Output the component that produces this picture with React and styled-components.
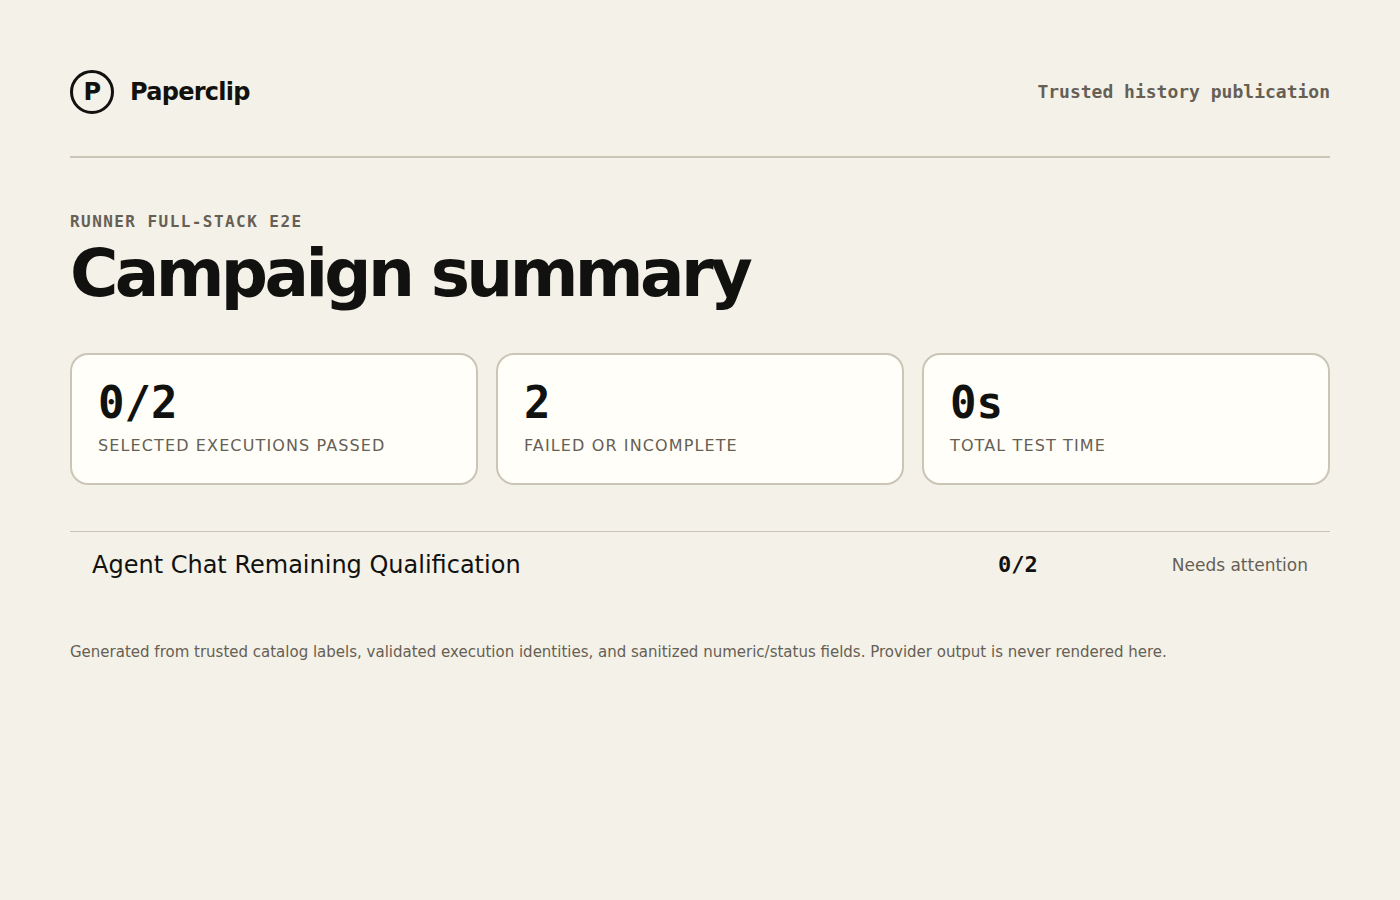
import styled, { createGlobalStyle } from 'styled-components';

const GlobalStyle = createGlobalStyle`
   * {
      box-sizing: border-box;
   }

   body {
      margin: 0;
      background: #f4f1e8;
      color: #11110f;
      font-family: 'DejaVu Sans', sans-serif;
   }
`;

const mono = `'DejaVu Sans Mono', monospace`;
const muted = '#665f55';
const line = '#cbc5b7';

const Page = styled.main`
   padding: 70px;
`;

const Header = styled.header`
   display: flex;
   align-items: center;
   justify-content: space-between;
   padding-bottom: 42px;
   border-bottom: 2px solid ${line};
`;

const Brand = styled.div`
   display: flex;
   align-items: center;
   gap: 16px;
   font-size: 24px;
   font-weight: 700;
   letter-spacing: -0.03em;
`;

const Mark = styled.span`
   display: grid;
   place-items: center;
   width: 44px;
   height: 44px;
   border: 3px solid #11110f;
   border-radius: 50%;
`;

const Source = styled.div`
   color: ${muted};
   font: 700 18px/22px ${mono};
`;

const Eyebrow = styled.p`
   margin: 54px 0 0;
   color: ${muted};
   font: 700 16px/20px ${mono};
   letter-spacing: 0.09em;
   text-transform: uppercase;
`;

const Title = styled.h1`
   margin: 7px 0 44px;
   font-size: 66px;
   line-height: 70px;
   letter-spacing: -0.055em;
`;

const Metrics = styled.section`
   display: grid;
   grid-template-columns: repeat(3, 1fr);
   gap: 18px;
`;

const Metric = styled.div`
   padding: 26px;
   background: #fffef8;
   border: 2px solid ${line};
   border-radius: 18px;
`;

const MetricValue = styled.strong`
   display: block;
   font: 700 44px/44px ${mono};
`;

const MetricLabel = styled.span`
   display: block;
   margin-top: 10px;
   color: ${muted};
   font-size: 16px;
   line-height: 22px;
   letter-spacing: 0.07em;
   text-transform: uppercase;
`;

const Table = styled.table`
   width: 100%;
   margin-top: 46px;
   border-collapse: collapse;
   border-top: 1px solid ${line};
`;

const Suite = styled.th`
   padding: 18px 22px;
   font-size: 24px;
   font-weight: 400;
   line-height: 30px;
   text-align: left;
`;

const Count = styled.td`
   width: 120px;
   padding: 0;
   font: 700 22px/30px ${mono};
`;

const Status = styled.td`
   width: 212px;
   padding: 0 22px 0 0;
   color: ${muted};
   font-size: 17px;
   text-align: right;
`;

const Note = styled.footer`
   margin-top: 44px;
   color: ${muted};
   font-size: 15px;
   line-height: 20px;
`;

const metrics = [
   { value: '0/2', label: 'Selected executions passed' },
   { value: '2', label: 'Failed or incomplete' },
   { value: '0s', label: 'Total test time' },
];

const suites = [
   {
      name: 'Agent Chat Remaining Qualification',
      passed: '0/2',
      status: 'Needs attention',
   },
];

const App = () => {
   return (
      <>
         <GlobalStyle />
         <Page>
            <Header>
               <Brand>
                  <Mark>P</Mark>
                  <span>Paperclip</span>
               </Brand>
               <Source>Trusted history publication</Source>
            </Header>
            <Eyebrow>Runner full-stack E2E</Eyebrow>
            <Title>Campaign summary</Title>
            <Metrics>
               {metrics.map(({ value, label }) => (
                  <Metric key={label}>
                     <MetricValue>{value}</MetricValue>
                     <MetricLabel>{label}</MetricLabel>
                  </Metric>
               ))}
            </Metrics>
            <Table>
               <tbody>
                  {suites.map(({ name, passed, status }) => (
                     <tr key={name}>
                        <Suite scope="row">{name}</Suite>
                        <Count>{passed}</Count>
                        <Status>{status}</Status>
                     </tr>
                  ))}
               </tbody>
            </Table>
            <Note>
               Generated from trusted catalog labels, validated execution
               identities, and sanitized numeric/status fields. Provider output
               is never rendered here.
            </Note>
         </Page>
      </>
   );
};

export default App;
